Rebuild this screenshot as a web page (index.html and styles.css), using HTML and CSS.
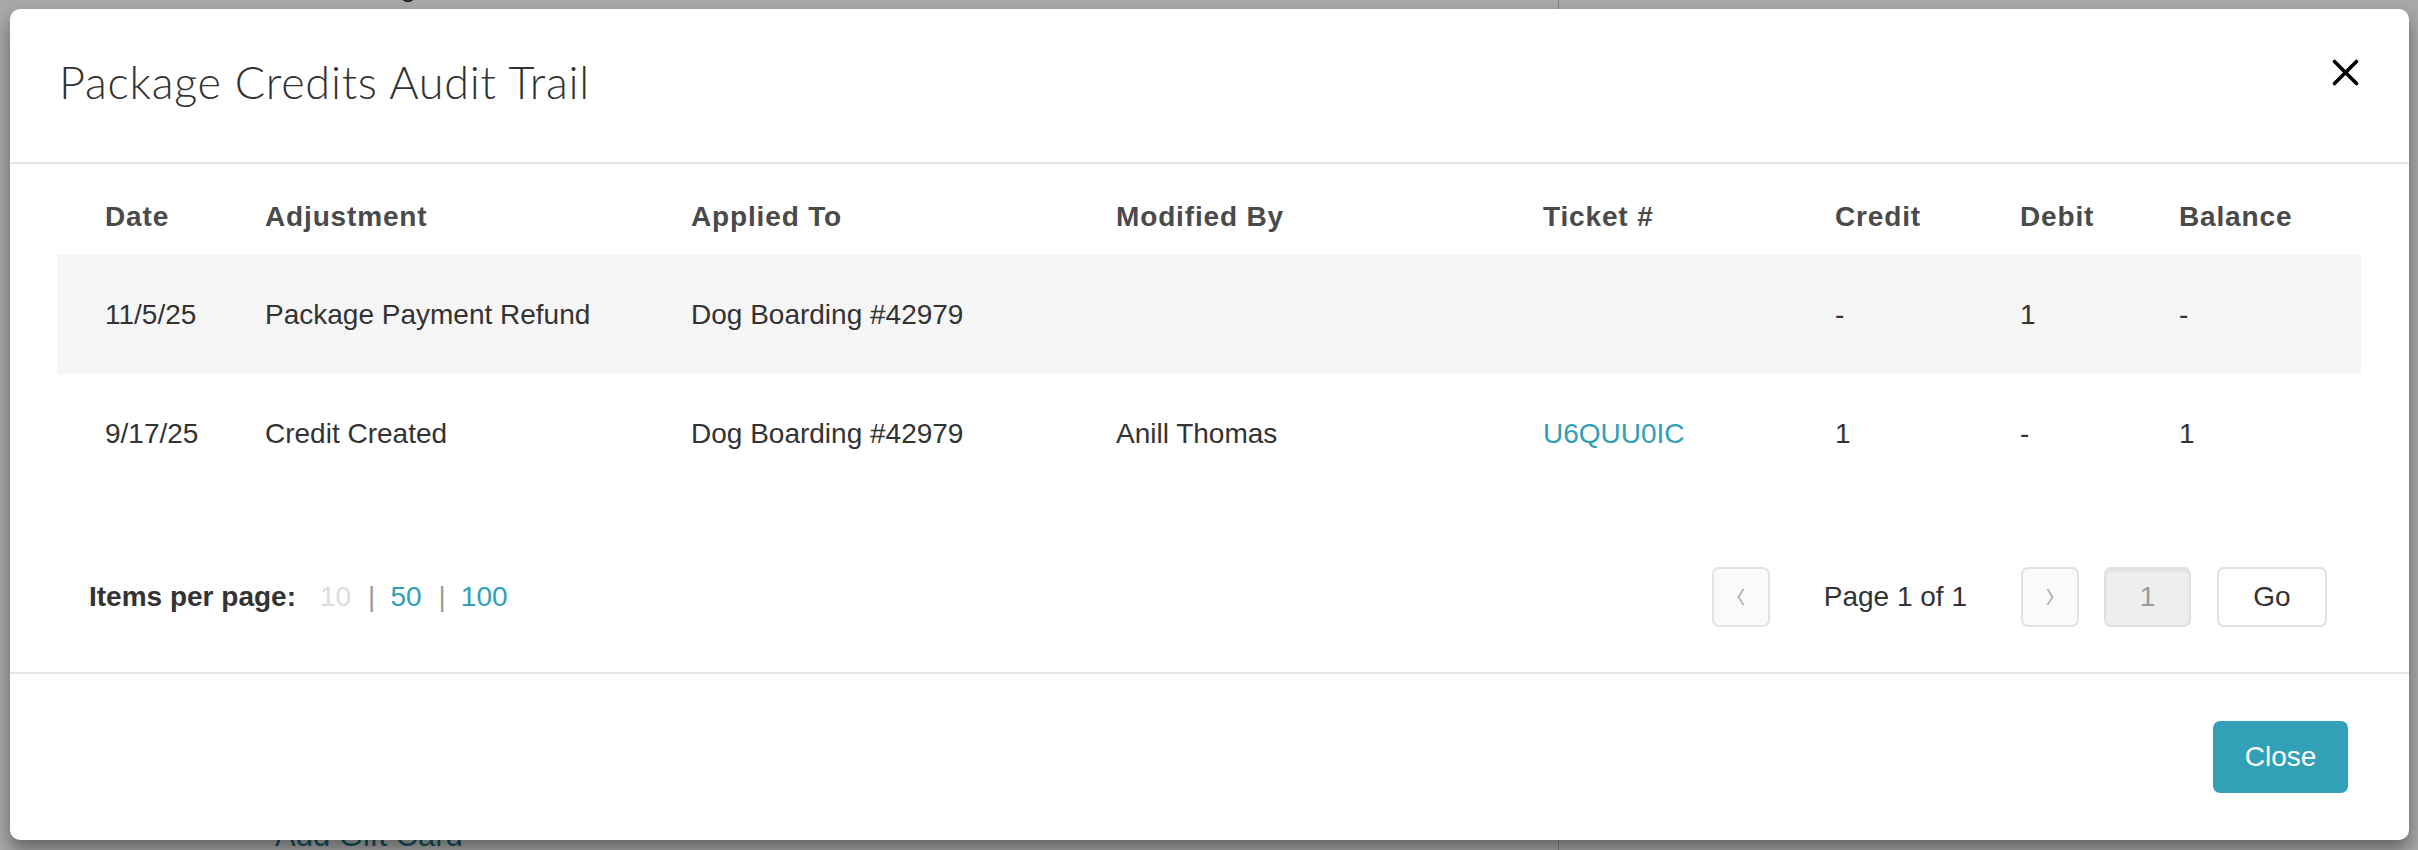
FILE: index.html
```html
<!DOCTYPE html>
<html>
<head>
<meta charset="utf-8">
<link rel="stylesheet" href="styles.css">
</head>
<body>
<div class="page">
  <div class="page-main">
    <div class="page-top"><span class="bg-text">Billing</span><span class="bg-link">Total,</span></div>
    <div class="page-bottom">Add Gift Card</div>
  </div>
  <div class="page-side"></div>
</div>
<div class="backdrop"></div>
<div class="modal">
  <div class="modal-header">
    <h4 class="modal-title">Package Credits Audit Trail</h4>
    <button class="close-x" aria-label="Close">
      <svg width="27" height="27" viewBox="0 0 27 27"><path d="M2.5 2.5 L24.5 24.5 M24.5 2.5 L2.5 24.5" stroke="#000" stroke-width="3.6" stroke-linecap="round" fill="none"/></svg>
    </button>
  </div>
  <div class="modal-body">
    <div class="trow thead">
      <div>Date</div><div>Adjustment</div><div>Applied To</div><div>Modified By</div><div>Ticket #</div><div>Credit</div><div>Debit</div><div>Balance</div>
    </div>
    <div class="trow striped">
      <div>11/5/25</div><div>Package Payment Refund</div><div>Dog Boarding #42979</div><div></div><div></div><div>-</div><div>1</div><div>-</div>
    </div>
    <div class="trow">
      <div>9/17/25</div><div>Credit Created</div><div>Dog Boarding #42979</div><div>Anill Thomas</div><div><a class="link">U6QUU0IC</a></div><div>1</div><div>-</div><div>1</div>
    </div>
    <div class="pager">
      <div class="per-page">
        <span class="per-label">Items per page:</span>
        <span class="per-opt disabled">10</span>
        <span class="sep">|</span>
        <a class="per-opt link">50</a>
        <span class="sep">|</span>
        <a class="per-opt link">100</a>
      </div>
      <div class="page-nav">
        <button class="pbtn nav-btn"><svg width="8" height="18" viewBox="0 0 8 18"><polyline points="6.5,1 1.5,9 6.5,17" fill="none" stroke="#b3b3b3" stroke-width="1.8"/></svg></button>
        <span class="page-label">Page 1 of 1</span>
        <button class="pbtn nav-btn"><svg width="8" height="18" viewBox="0 0 8 18"><polyline points="1.5,1 6.5,9 1.5,17" fill="none" stroke="#b3b3b3" stroke-width="1.8"/></svg></button>
        <div class="page-input">1</div>
        <button class="pbtn go-btn">Go</button>
      </div>
    </div>
  </div>
  <div class="modal-footer">
    <button class="btn-close">Close</button>
  </div>
</div>
</body>
</html>
```
FILE: styles.css
```css
html, body {
  margin: 0;
  padding: 0;
}
body {
  width: 2418px;
  height: 850px;
  overflow: hidden;
  position: relative;
  font-family: "Liberation Sans", Arial, sans-serif;
  font-size: 28px;
  color: #333;
  background: #fff;
}
.page {
  display: flex;
  height: 850px;
}
.page-main {
  width: 1558px;
  border-right: 1px solid #c4c4c4;
  display: flex;
  flex-direction: column;
  justify-content: space-between;
}
.page-top {
  margin-top: -30px;
  display: flex;
  line-height: 34px;
}
.bg-text {
  margin-left: 341px;
  color: #333;
}
.bg-link {
  margin-left: 1000px;
  color: #2a8ea3;
}
.page-bottom {
  margin-left: 275px;
  margin-bottom: -3px;
  font-size: 31px;
  line-height: 34px;
  color: #1f7f94;
}
.page-side {
  flex: 1;
}
.backdrop {
  position: absolute;
  inset: 0;
  background: rgba(0, 0, 0, 0.34);
}
.modal {
  position: absolute;
  left: 10px;
  top: 9px;
  width: 2399px;
  background: #fff;
  border-radius: 10px;
  box-shadow: 0 10px 18px rgba(0, 0, 0, 0.4);
}
.modal-header {
  height: 155px;
  box-sizing: border-box;
  border-bottom: 2px solid #e5e5e5;
  display: flex;
  justify-content: space-between;
  align-items: flex-start;
  padding: 0 50px 0 49px;
}
.modal-title {
  margin: 51px 0 0;
  font-family: Lato, "Open Sans", sans-serif;
  font-weight: 300;
  font-size: 45px;
  letter-spacing: 0.75px;
  line-height: 1;
  color: #333;
}
.close-x {
  margin-top: 50px;
  padding: 0;
  border: 0;
  background: none;
  width: 27px;
  height: 27px;
  display: block;
}
.close-x svg {
  display: block;
}
.modal-body {
  padding: 15px 48px 0 47px;
}
.trow {
  display: grid;
  grid-template-columns: 160px 426px 425px 427px 292px 185px 159px 1fr;
  align-items: center;
  height: 119px;
  padding-left: 48px;
  line-height: 32px;
}
.trow.thead {
  height: 76px;
  font-weight: bold;
  color: #4a4a4a;
  letter-spacing: 0.85px;
}
.trow.striped {
  background: #f6f6f6;
}
.link {
  color: #31a0b6;
  text-decoration: none;
}
.pager {
  display: flex;
  justify-content: space-between;
  align-items: center;
  padding: 74px 34px 45px 32px;
}
.per-page {
  display: flex;
  align-items: center;
}
.per-label {
  font-weight: bold;
  color: #333;
  margin-right: 24px;
}
.per-opt.disabled {
  color: #dcdcdc;
}
.sep {
  color: #9a9a9a;
  margin: 0 15px 0 17px;
}
.page-nav {
  display: flex;
  align-items: center;
}
.pbtn {
  font-family: "Liberation Sans", Arial, sans-serif;
  font-size: 28px;
  height: 60px;
  box-sizing: border-box;
  border: 2px solid #e2e2e2;
  border-radius: 7px;
  background: #fff;
  color: #333;
  padding: 0;
  display: flex;
  align-items: center;
  justify-content: center;
}
.nav-btn {
  width: 58px;
  background: #fafafa;
}
.page-label {
  margin: 0 54px;
  color: #333;
}
.page-input {
  width: 87px;
  height: 60px;
  box-sizing: border-box;
  margin-left: 25px;
  border: 2px solid #e0e0e0;
  border-radius: 7px;
  background: #eeeeee;
  box-shadow: inset 0 3px 3px rgba(0, 0, 0, 0.05);
  color: #999;
  display: flex;
  align-items: center;
  justify-content: center;
}
.go-btn {
  width: 110px;
  margin-left: 26px;
}
.modal-footer {
  border-top: 2px solid #e5e5e5;
  padding: 47px 61px 47px 0;
  display: flex;
  justify-content: flex-end;
}
.btn-close {
  width: 135px;
  height: 72px;
  border: 0;
  border-radius: 7px;
  background: #32a0b6;
  color: #fff;
  font-family: "Liberation Sans", Arial, sans-serif;
  font-size: 28px;
  padding: 0;
}
```
